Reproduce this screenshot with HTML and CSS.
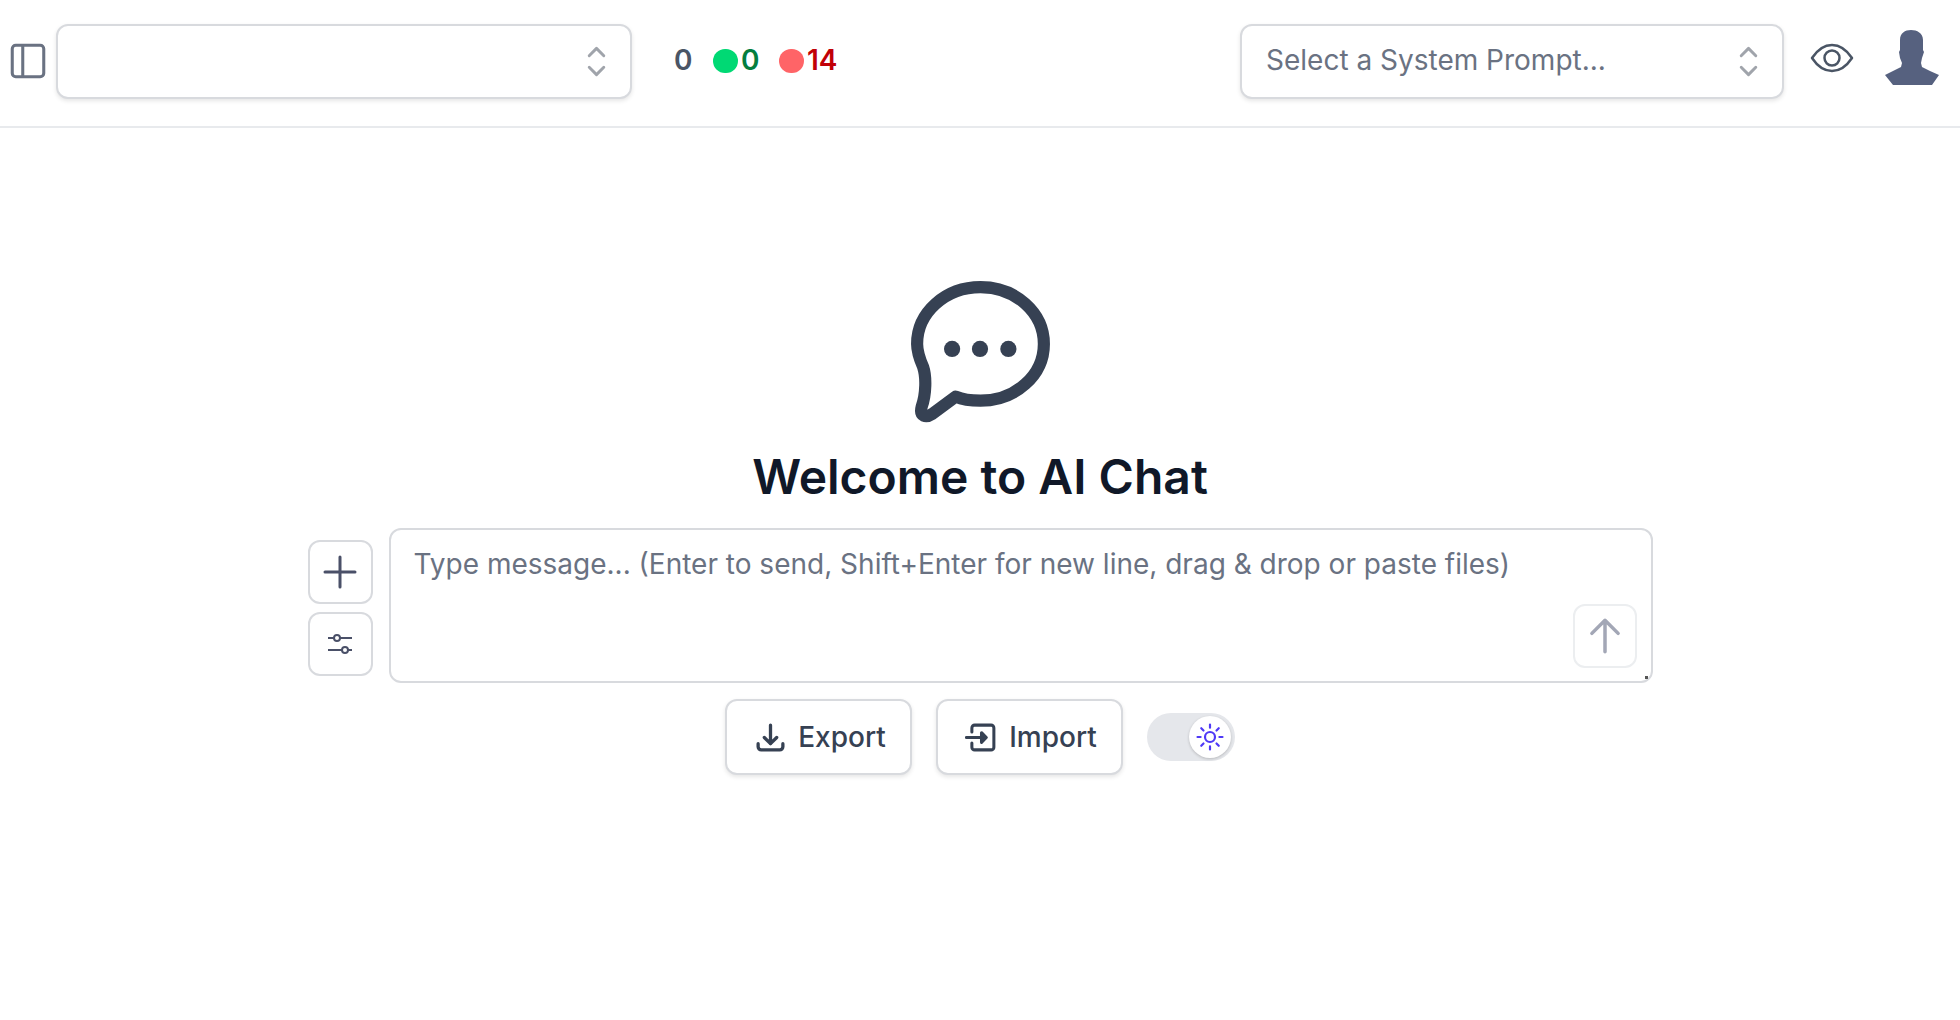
FILE: index.html
```html
<!DOCTYPE html>
<html lang="en">
<head>
  <meta charset="UTF-8" />
  <title>AI Chat</title>
  <link rel="stylesheet" href="styles.css">
</head>
<body>
  <header class="topbar">
    <button class="sidebar-btn" aria-label="Toggle sidebar">
      <svg width="42" height="42" viewBox="0 0 24 24" fill="none" stroke="currentColor" stroke-width="1.75"><rect x="3" y="3" width="18" height="18" rx="2"/><path d="M9 3v18"/></svg>
    </button>
    <div class="select select-model">
      <span></span>
      <svg class="chevrons" width="35" height="35" viewBox="0 0 24 24" fill="none" stroke="currentColor" stroke-width="2" stroke-linecap="round" stroke-linejoin="round"><path d="m7 16 5 5 5-5"/><path d="m7 8 5-5 5 5"/></svg>
    </div>
    <div class="stats">
      <span class="stat-total">0</span>
      <span class="stat"><i class="dot dot-green"></i><b class="num-green">0</b></span>
      <span class="stat"><i class="dot dot-red"></i><b class="num-red">14</b></span>
    </div>
    <div class="topbar-right">
      <div class="select select-prompt">
        <span>Select a System Prompt...</span>
        <svg class="chevrons" width="35" height="35" viewBox="0 0 24 24" fill="none" stroke="currentColor" stroke-width="2" stroke-linecap="round" stroke-linejoin="round"><path d="m7 16 5 5 5-5"/><path d="m7 8 5-5 5 5"/></svg>
      </div>
      <button class="eye-btn" aria-label="Preview">
        <svg width="44" height="30" viewBox="0 0 44 30" fill="none" stroke="currentColor" stroke-width="2.500" stroke-linejoin="round"><path d="M2 15C8 6 14 2 22 2s14 4 20 13c-6 9-12 13-20 13S8 24 2 15Z"/><circle cx="22" cy="15" r="7.500"/></svg>
      </button>
      <svg class="avatar" width="56" height="56" viewBox="0 0 56 56" fill="#56617f"><path d="M16 10C16 3 21 0 27 0C33 0 39 3 39 10L39 20L40 22L38 28L37 33L38 37L46 41L55 45L48 55L9 55L1 45L9 41L17 37L18 33L16 28L15 22L16 20Z"/></svg>
    </div>
  </header>

  <main class="welcome">
    <svg class="logo" width="142" height="144" viewBox="0 0 140 142" fill="none" stroke="#364153" stroke-width="12" stroke-linejoin="round" stroke-linecap="round">
      <path d="M45 115C52 118 60 119 69.500 119C104 119 132 94 132 63C132 32 104 7 69.500 7C35 7 7 32 7 63C7 72 10 79 13 86C16 95 16 112 11.500 125C9 135 16 136 22 132Z"/>
      <g fill="#364153" stroke="none"><circle cx="41.500" cy="68" r="8"/><circle cx="69" cy="68" r="8"/><circle cx="97" cy="68" r="8"/></g>
    </svg>
    <h1>Welcome to AI Chat</h1>

    <div class="composer">
      <div class="side-btns">
        <button class="square-btn" aria-label="Add">
          <svg width="48" height="48" viewBox="0 0 24 24" fill="none" stroke="currentColor" stroke-width="1.500" stroke-linecap="round"><path d="M12 4.500v15m7.500-7.500h-15"/></svg>
        </button>
        <button class="square-btn" aria-label="Settings">
          <svg width="28" height="22" viewBox="0 0 28 22" fill="none" stroke="currentColor" stroke-width="2"><path d="M2 5h6m6 0h12M2 17h14m6 0h4"/><circle cx="11" cy="5" r="3"/><circle cx="19" cy="17" r="3"/></svg>
        </button>
      </div>
      <div class="input-wrap">
        <textarea class="message" placeholder="Type message... (Enter to send, Shift+Enter for new line, drag &amp; drop or paste files)"></textarea>
        <button class="send-btn" aria-label="Send">
          <svg width="42" height="42" viewBox="0 0 24 24" fill="none" stroke="currentColor" stroke-width="2" stroke-linecap="round" stroke-linejoin="round"><path d="M4.500 10.500 12 3m0 0 7.500 7.500M12 3v18"/></svg>
        </button>
        <span class="resize-dot"></span>
      </div>
    </div>

    <div class="actions">
      <button class="action-btn">
        <svg width="33" height="33" viewBox="0 0 24 24" fill="none" stroke="currentColor" stroke-width="2.400" stroke-linecap="round" stroke-linejoin="round"><path d="M3 16.500v2.250A2.250 2.250 0 0 0 5.250 21h13.500A2.250 2.250 0 0 0 21 18.750V16.500M16.500 12 12 16.500m0 0L7.500 12m4.500 4.500V3"/></svg>
        Export
      </button>
      <button class="action-btn">
        <svg width="33" height="33" viewBox="0 0 24 24" fill="none" stroke="currentColor" stroke-width="2.200" stroke-linecap="round" stroke-linejoin="round"><path d="M5 8V5a2 2 0 0 1 2-2h12a2 2 0 0 1 2 2v14a2 2 0 0 1-2 2H7a2 2 0 0 1-2-2v-3"/><path d="M1 12h14"/><path d="m12 8.500 3.500 3.500-3.500 3.500Z" fill="currentColor"/></svg>
        Import
      </button>
      <div class="toggle">
        <span class="knob">
          <svg width="30" height="30" viewBox="0 0 24 24" fill="none" stroke="currentColor" stroke-width="1.750" stroke-linecap="round"><circle cx="12" cy="12" r="4"/><path d="M12 2v2.500M12 19.500V22M2 12h2.500M19.500 12H22M5 5l1.800 1.800M17.200 17.200 19 19M5 19l1.800-1.800M17.200 6.800 19 5"/></svg>
        </span>
      </div>
    </div>
  </main>
</body>
</html>
```

FILE: styles.css
```css
* {
  box-sizing: border-box;
}
body {
  margin: 0;
  height: 1020px;
  overflow: hidden;
  background: #fff;
  color: #364153;
  font-family: Inter, "Noto Sans", sans-serif;
  font-size: 28px;
}
button {
  font: inherit;
  color: inherit;
  background: none;
  border: none;
  padding: 0;
}
.topbar {
  display: flex;
  align-items: center;
  height: 128px;
  padding: 0 20px 3px 7px;
  border-bottom: 2px solid #e8eaed;
}
.sidebar-btn {
  display: flex;
  width: 42px;
  margin: -2px 7px 0 0;
  color: #6a7282;
}
.select {
  display: flex;
  align-items: center;
  justify-content: space-between;
  height: 75px;
  padding: 0 16px 0 24px;
  border: 2px solid #d8dade;
  border-radius: 12px;
  background: #fff;
  box-shadow: 0 2px 4px rgba(0,0,0,0.1);
  color: #6a7282;
}
.select span {
  margin-bottom: 3px;
}
.select-model {
  width: 576px;
}
.select-prompt {
  width: 544px;
}
.chevrons {
  color: #a0a4ab;
}
.stats {
  display: flex;
  align-items: center;
  margin: -3px 0 0 42px;
  font-weight: 600;
  gap: 20px;
  color: #4a5565;
}
.stat-total {
  margin-right: 1px;
}
.stat {
  display: flex;
  align-items: center;
  gap: 3px;
}
.stat b {
  font-weight: 600;
}
.dot {
  width: 24.500px;
  height: 24.500px;
  border-radius: 50%;
  margin-top: 2px;
}
.dot-green {
  background: #00d974;
}
.dot-red {
  background: #ff6467;
}
.num-green {
  color: #047e3f;
}
.num-red {
  color: #c10007;
}
.topbar-right {
  display: flex;
  align-items: center;
  margin-left: auto;
}
.eye-btn {
  display: flex;
  margin: -8px 0 0 26px;
  color: #4a5565;
}
.avatar {
  margin: -7px 0 0 30px;
}
.welcome {
  display: flex;
  flex-direction: column;
  align-items: center;
  padding-top: 152px;
}
.logo {
  display: block;
  margin-left: 2px;
}
h1 {
  margin: 18px 0 0;
  font-size: 48px;
  line-height: 70px;
  font-weight: 600;
  color: #101828;
}
.composer {
  display: flex;
  align-items: center;
  gap: 16px;
  margin-top: 16px;
}
.side-btns {
  display: flex;
  flex-direction: column;
  gap: 8px;
  margin-top: 5px;
}
.square-btn {
  display: flex;
  align-items: center;
  justify-content: center;
  width: 65px;
  height: 64px;
  border: 2px solid #d8dade;
  border-radius: 12px;
  color: #4a5068;
}
.input-wrap {
  position: relative;
  display: flex;
  width: 1264px;
}
.message {
  width: 100%;
  height: 155px;
  padding: 16px 23px;
  border: 2px solid #d8dade;
  border-radius: 12px;
  font: inherit;
  line-height: 36px;
  outline: none;
  resize: none;
}
.message::placeholder {
  color: #6a7282;
  opacity: 1;
}
.send-btn {
  position: absolute;
  right: 16px;
  bottom: 15px;
  display: flex;
  align-items: center;
  justify-content: center;
  width: 64px;
  height: 64px;
  border: 2px solid #eceef0;
  border-radius: 12px;
  color: #a3a7b6;
}
.resize-dot {
  position: absolute;
  right: 5px;
  bottom: 4px;
  width: 3px;
  height: 3px;
  background: #555;
}
.actions {
  display: flex;
  align-items: center;
  gap: 24px;
  margin-top: 16px;
}
.action-btn {
  display: flex;
  align-items: center;
  justify-content: center;
  gap: 11px;
  width: 187px;
  height: 76px;
  padding-left: 3px;
  border: 2px solid #d8dade;
  border-radius: 12px;
  background: #fff;
  box-shadow: 0 2px 4px rgba(0,0,0,0.1);
  font-weight: 500;
  color: #364153;
}
.toggle {
  display: flex;
  justify-content: flex-end;
  align-items: center;
  width: 88px;
  height: 48px;
  padding-right: 4px;
  border-radius: 24px;
  background: #e5e7eb;
}
.knob {
  display: flex;
  align-items: center;
  justify-content: center;
  width: 42px;
  height: 42px;
  border-radius: 50%;
  background: #fff;
  box-shadow: 0 1px 3px rgba(0,0,0,0.2);
  color: #4f39f6;
}
```
